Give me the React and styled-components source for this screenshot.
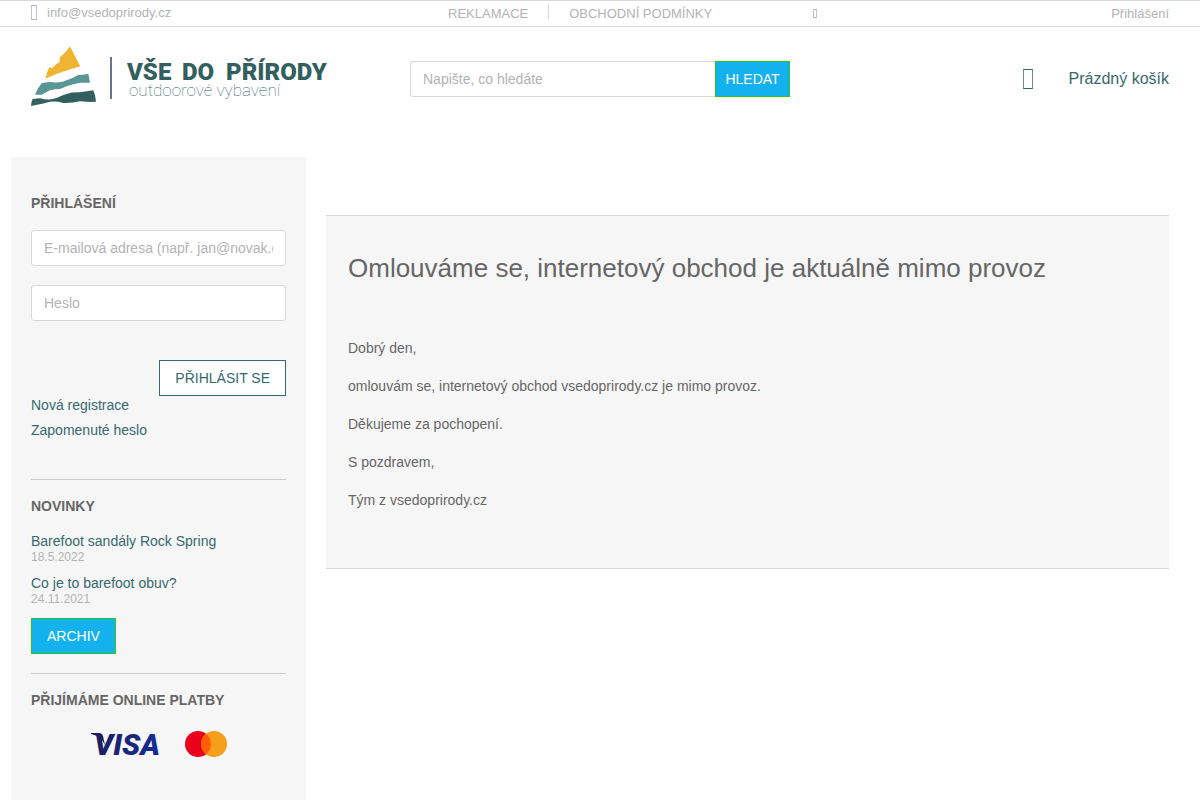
import React, { useState } from 'react'
import styled, { createGlobalStyle, css } from 'styled-components'

const news = [
  { title: 'Barefoot sandály Rock Spring', date: '18.5.2022' },
  { title: 'Co je to barefoot obuv?', date: '24.11.2021' },
]

const Logo = () => (
  <svg width='300' height='68' viewBox='0 0 300 68' role='img' aria-label='Vše do přírody'>
    <path
      fill='#f0b433'
      d='M39 1.3L49.3 21.5C42 23.5 34 26 26 28.7L14.3 33.7L16.5 26L18.3 22.2L21.3 23L25.7 18.7L28.3 17.7L29 12.3L34.3 7.3Z'
    />
    <path
      fill='#5a9696'
      d='M4 49.7Q6.5 43 10.7 38.3Q15 37.6 19 37Q26 38 32.3 36.5L40.7 33.3L47.3 30Q52 30 57.3 28.7L59 37.7Q54 38 49 37.7Q42 39 35.7 41.3L29 44Q24 44 19 45.3L10.7 49.7Z'
    />
    <path
      fill='#335f5f'
      d='M0 61Q0 57 1.7 54L9 53.3Q14 54.8 19 54.6Q26 53.5 32.3 50L40.7 47.5L49 47.2L62.3 45.3L64 50L65 56.7L59 57L49 56.2Q40 58.5 32.3 57.9Q25 56 19 56.8L12.3 58.6Z'
    />
    <rect x='79' y='12' width='2' height='42' fill='#65758a' />
    <LogoName y='35'>
      <tspan x='96'>VŠE </tspan>
      <tspan x='151'>DO </tspan>
      <tspan x='195'>PŘÍRODY</tspan>
    </LogoName>
    <LogoTagline x='98' y='51'>
      outdoorové vybavení
    </LogoTagline>
  </svg>
)

const Visa = () => (
  <svg width='70' height='34' viewBox='0 0 70 34' role='img' aria-label='Visa'>
    <defs>
      <linearGradient id='visa' x1='0' x2='1'>
        <stop offset='0' stopColor='#1c1f5f' />
        <stop offset='1' stopColor='#142e96' />
      </linearGradient>
    </defs>
    <path fill='#1c1f5f' d='M0 6H8Q11 6 12 9L14 18Q10 9 0 7Z' />
    <VisaText x='3' y='28' fill='url(#visa)'>
      VISA
    </VisaText>
  </svg>
)

const Mastercard = () => (
  <svg width='42' height='34' viewBox='0 0 42 34' role='img' aria-label='Mastercard'>
    <circle cx='13' cy='17' r='13' fill='#eb001b' />
    <circle cx='29' cy='17' r='13' fill='#f79e1b' />
    <path fill='#ff5f00' d='M21 6.8A13 13 0 0 1 21 27.2A13 13 0 0 1 21 6.8Z' />
  </svg>
)

const App = () => {
  const [query, setQuery] = useState('')
  const [email, setEmail] = useState('')
  const [password, setPassword] = useState('')

  const handleSubmit = (e) => e.preventDefault()

  return (
    <Page>
      <GlobalStyle />
      <TopBar>
        <Contact href='mailto:info@vsedoprirody.cz'>
          <Glyph $width={6} $height={15} />
          info@vsedoprirody.cz
        </Contact>
        <TopNav>
          <a href='#reklamace'>REKLAMACE</a>
          <Separator />
          <a href='#podminky'>OBCHODNÍ PODMÍNKY</a>
        </TopNav>
        <TopRight>
          <Glyph $width={4} $height={9} />
          <a href='#prihlaseni'>Přihlášení</a>
        </TopRight>
      </TopBar>

      <Header>
        <LogoLink href='#home'>
          <Logo />
        </LogoLink>
        <SearchForm onSubmit={handleSubmit}>
          <Input
            type='search'
            aria-label='Hledat'
            placeholder='Napište, co hledáte'
            value={query}
            onChange={(e) => setQuery(e.target.value)}
          />
          <Button type='submit' $padding={9}>
            HLEDAT
          </Button>
        </SearchForm>
        <Cart href='#kosik'>
          <Glyph $width={10} $height={20} />
          Prázdný košík
        </Cart>
      </Header>

      <Content>
        <Sidebar>
          <Section>
            <h4>PŘIHLÁŠENÍ</h4>
            <LoginForm id='prihlaseni' onSubmit={handleSubmit}>
              <Input
                type='email'
                aria-label='E-mailová adresa'
                placeholder='E-mailová adresa (např. jan@novak.cz)'
                value={email}
                onChange={(e) => setEmail(e.target.value)}
              />
              <Input
                type='password'
                aria-label='Heslo'
                placeholder='Heslo'
                value={password}
                onChange={(e) => setPassword(e.target.value)}
              />
              <Button type='submit' $outline $padding={15}>
                PŘIHLÁSIT SE
              </Button>
            </LoginForm>
            <LoginLinks>
              <a href='#registrace'>Nová registrace</a>
              <a href='#heslo'>Zapomenuté heslo</a>
            </LoginLinks>
          </Section>

          <Section>
            <h4>NOVINKY</h4>
            <NewsList>
              {news.map((item) => (
                <li key={item.title}>
                  <a href='#novinky'>{item.title}</a>
                  <time>{item.date}</time>
                </li>
              ))}
            </NewsList>
            <Button as='a' href='#archiv' $padding={15}>
              ARCHIV
            </Button>
          </Section>

          <Section>
            <h4>PŘIJÍMÁME ONLINE PLATBY</h4>
            <Payments>
              <Visa />
              <Mastercard />
            </Payments>
          </Section>
        </Sidebar>

        <Notice>
          <h1>Omlouváme se, internetový obchod je aktuálně mimo provoz</h1>
          <p>Dobrý den,</p>
          <p>omlouvám se, internetový obchod vsedoprirody.cz je mimo provoz.</p>
          <p>Děkujeme za pochopení.</p>
          <p>S pozdravem,</p>
          <p>Tým z vsedoprirody.cz</p>
        </Notice>
      </Content>
    </Page>
  )
}

const GlobalStyle = createGlobalStyle`
  * {
    box-sizing: border-box;
  }
  body {
    margin: 0;
    background: #fff;
    color: #666;
    font-family: 'Liberation Sans', Arial, sans-serif;
    font-size: 14px;
  }
  a {
    color: #35696e;
    text-decoration: none;
  }
`

const Page = styled.div`
  display: flex;
  flex-direction: column;
  min-height: 100vh;
`

const columns = css`
  display: grid;
  grid-template-columns: 1fr 380px 1fr;
  align-items: center;
  padding: 0 31px;
`

const TopBar = styled.div`
  ${columns}
  border: solid #d9d9d9;
  border-width: 1px 0;
  font-size: 13px;
  line-height: 25px;
  color: #b3b3b3;
  a {
    color: inherit;
  }
`

const Glyph = styled.span`
  flex: none;
  width: ${(props) => props.$width}px;
  height: ${(props) => props.$height}px;
  border: 1px solid currentColor;
  border-left-color: color-mix(in srgb, currentColor 75%, transparent);
  border-right-color: color-mix(in srgb, currentColor 75%, transparent);
`

const Contact = styled.a`
  display: flex;
  align-items: center;
  align-self: start;
  gap: 10px;
  line-height: 23px;
`

const TopNav = styled.nav`
  display: flex;
  gap: 20px;
  padding-left: 38px;
`

const Separator = styled.span`
  width: 1px;
  height: 14px;
  margin-top: 4px;
  background: #d9d9d9;
`

const TopRight = styled.div`
  display: flex;
  align-items: center;
  justify-content: space-between;
  padding-left: 23px;
`

const Header = styled.header`
  ${columns}
  padding-top: 18px;
  padding-bottom: 44px;
`

const LogoLink = styled.a`
  display: flex;
`

const LogoName = styled.text`
  font: 900 24px Roboto, sans-serif;
  fill: #335f5f;
`

const LogoTagline = styled.text`
  font: 100 17px Roboto, sans-serif;
  fill: #335f5f;
`

const VisaText = styled.text`
  font: italic 900 30px Roboto, sans-serif;
`

const Input = styled.input`
  flex: 1;
  width: 100%;
  min-width: 0;
  height: 36px;
  padding: 0 12px;
  border: 1px solid #d9d9d9;
  border-radius: 3px;
  background: #fff;
  color: #666;
  font: inherit;
  appearance: none;
  &::placeholder {
    color: #b3b3b3;
  }
`

const Button = styled.button`
  display: inline-block;
  height: 36px;
  padding: 0 ${(props) => props.$padding}px;
  border: 1px solid ${(props) => (props.$outline ? '#35696e' : '#33c410')};
  background: ${(props) => (props.$outline ? '#fff' : '#14b1ef')};
  color: ${(props) => (props.$outline ? '#35696e' : '#fff')};
  font: inherit;
  line-height: 34px;
  cursor: pointer;
`

const SearchForm = styled.form`
  display: flex;
  ${Input} {
    border-right: 0;
    border-radius: 3px 0 0 3px;
  }
  ${Button} {
    min-width: 75px;
  }
`

const Cart = styled.a`
  display: flex;
  align-items: center;
  justify-content: flex-end;
  gap: 36px;
  font-size: 16px;
`

const Content = styled.div`
  display: flex;
  align-items: flex-start;
  flex: 1;
  gap: 20px;
  padding: 0 31px 0 11px;
`

const Sidebar = styled.aside`
  flex: 0 0 295px;
  align-self: stretch;
  padding: 20px 20px 40px;
  background: #f6f6f6;
`

const Section = styled.section`
  padding: 16px 0 19px;
  & + & {
    border-top: 1px solid #ccc;
  }
  h4 {
    margin: 0 0 16px;
    font-size: 14px;
    line-height: 21px;
  }
`

const LoginForm = styled.form`
  display: flex;
  flex-direction: column;
  align-items: flex-end;
  gap: 19px;
  ${Input} {
    flex: none;
  }
  ${Button} {
    margin-top: 20px;
  }
`

const LoginLinks = styled.div`
  display: flex;
  flex-direction: column;
  align-items: flex-start;
  gap: 7px;
  padding-bottom: 21px;
  line-height: 18px;
`

const NewsList = styled.ul`
  display: grid;
  gap: 10px;
  margin: 0 0 11px;
  padding: 0;
  list-style: none;
  line-height: 16px;
  a,
  time {
    display: block;
  }
  time {
    color: #b3b3b3;
    font-size: 12px;
  }
`

const Payments = styled.div`
  display: flex;
  justify-content: center;
  gap: 24px;
`

const Notice = styled.main`
  flex: 1;
  margin-top: 58px;
  padding: 36px 22px 40px;
  border: solid #d9d9d9;
  border-width: 1px 0;
  background: #f6f6f6;
  h1 {
    margin: 0 0 54px;
    font-size: 26px;
    font-weight: 400;
    line-height: 32px;
  }
  p {
    margin: 0 0 17px;
    line-height: 21px;
  }
`

export default App
